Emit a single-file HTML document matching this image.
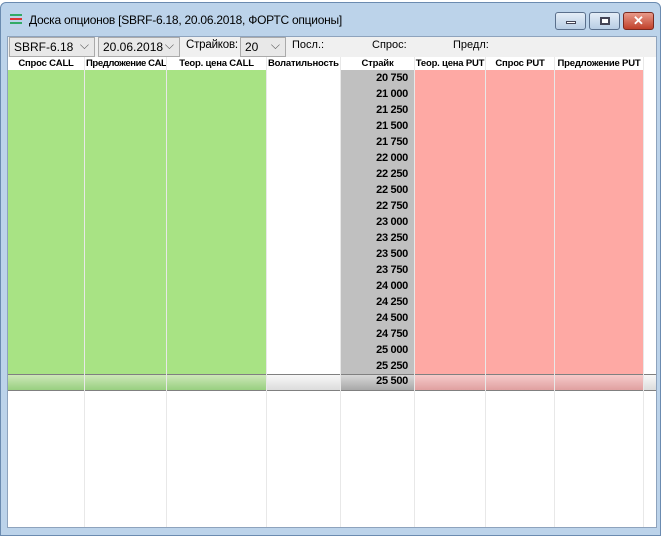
<!DOCTYPE html>
<html><head><meta charset="utf-8"><style>
*{margin:0;padding:0;box-sizing:border-box}
body{width:667px;height:536px;background:#fff;position:relative;overflow:hidden;font-family:"Liberation Sans",sans-serif}
.a{position:absolute}
.frame{left:0;top:2px;width:661px;height:534px;background:#bcd3ea;border:1px solid #6b8bb0;border-radius:6px 6px 0 0}
.tb{font-size:12px;color:#000}
.btn{top:12px;height:18px;border:1px solid #5a6f8c;border-radius:3px;background:linear-gradient(#e4edf7,#b8cde4)}
.content{left:7px;top:36px;width:650px;height:492px;background:#f0f0f0;border:1px solid #8ea3bd}
.sel{top:37px;height:20px;border:1px solid #aaa;background:#e8e8e8;font-size:12px;padding:2px 4px}
.sel:after{content:"⌵";position:absolute;right:5px;top:0px;font-size:12px;color:#555}
.hd{top:57px;height:13px;background:#fff;font-size:9.5px;font-weight:bold;text-align:center;line-height:13px;white-space:nowrap;overflow:hidden;letter-spacing:-0.2px}
.num{right:0;width:100%;font-size:11px;font-weight:bold;text-align:right;padding-right:6px;height:16px;line-height:16px;letter-spacing:-0.3px}
</style></head><body>
<div class="a frame"></div>
<div class="a" style="left:10px;top:13px;width:12px;height:12px">
<div style="height:2px;background:#3a6;margin-top:1px"></div><div style="height:2px;background:#d33;margin-top:2px"></div><div style="height:2px;background:#3a6;margin-top:2px"></div></div>
<div class="a tb" style="left:29px;top:13px;letter-spacing:-0.25px">Доска опционов [SBRF-6.18, 20.06.2018, ФОРТС опционы]</div>
<div class="a btn" style="left:555px;width:31px"><div class="a" style="left:10px;top:8px;width:10px;height:3px;background:#fff;border:1px solid #445"></div></div>
<div class="a btn" style="left:589px;width:31px"><div class="a" style="left:10px;top:4px;width:10px;height:8px;border:2px solid #445;background:#fff"></div></div>
<div class="a btn" style="left:623px;width:31px;background:linear-gradient(#e89a8a,#c0402a);border-color:#7a2a20;color:#fff;font-weight:bold;font-size:13px;text-align:center;line-height:16px">✕</div>
<div class="a content"></div>
<div class="a sel" style="left:9px;width:86px">SBRF-6.18</div>
<div class="a sel" style="left:98px;width:82px">20.06.2018</div>
<div class="a tb" style="left:186px;top:39px;font-size:11.5px;letter-spacing:-0.2px">Страйков:</div>
<div class="a sel" style="left:240px;width:46px">20</div>
<div class="a tb" style="left:292px;top:39px;font-size:11px">Посл.:</div>
<div class="a tb" style="left:372px;top:39px;font-size:11px">Спрос:</div>
<div class="a tb" style="left:453px;top:39px;font-size:11px">Предл:</div>
<div class="a" style="left:8px;top:57px;width:648px;height:470px;background:#fff"></div>
<div class="a hd" style="left:8px;width:76px">Спрос CALL</div>
<div class="a hd" style="left:85px;width:81px;text-align:left;padding-left:1px;letter-spacing:-0.4px">Предложение CALL</div>
<div class="a hd" style="left:167px;width:99px">Теор. цена CALL</div>
<div class="a hd" style="left:267px;width:73px;text-align:left;padding-left:1px">Волатильность</div>
<div class="a hd" style="left:341px;width:73px">Страйк</div>
<div class="a hd" style="left:415px;width:70px">Теор. цена PUT</div>
<div class="a hd" style="left:486px;width:68px">Спрос PUT</div>
<div class="a hd" style="left:555px;width:88px">Предложение PUT</div>
<div class="a" style="left:8px;top:70px;width:258px;height:305px;background:#a8e384"></div>
<div class="a" style="left:340px;top:70px;width:74px;height:305px;background:#c0c0c0"></div>
<div class="a" style="left:414px;top:70px;width:229px;height:305px;background:#fea9a4"></div>
<div class="a" style="left:8px;top:374px;width:648px;height:17px;border-top:1px solid #808080;border-bottom:1px solid #808080;background:linear-gradient(#f8f8f8,#dcdcdc)"></div>
<div class="a" style="left:8px;top:375px;width:258px;height:15px;background:linear-gradient(#cde8b8,#98cf80)"></div>
<div class="a" style="left:340px;top:375px;width:74px;height:15px;background:linear-gradient(#d8d8d8,#a8a8a8)"></div>
<div class="a" style="left:414px;top:375px;width:229px;height:15px;background:linear-gradient(#f6caca,#e0a0a0)"></div>
<div class="a" style="left:84px;top:57px;width:1px;height:470px;background:#e8e8e8"></div>
<div class="a" style="left:166px;top:57px;width:1px;height:470px;background:#e8e8e8"></div>
<div class="a" style="left:266px;top:57px;width:1px;height:470px;background:#e8e8e8"></div>
<div class="a" style="left:340px;top:57px;width:1px;height:470px;background:#e8e8e8"></div>
<div class="a" style="left:414px;top:57px;width:1px;height:470px;background:#e8e8e8"></div>
<div class="a" style="left:485px;top:57px;width:1px;height:470px;background:#e8e8e8"></div>
<div class="a" style="left:554px;top:57px;width:1px;height:470px;background:#e8e8e8"></div>
<div class="a" style="left:643px;top:57px;width:1px;height:470px;background:#e8e8e8"></div>
<div class="a" style="left:340px;top:70px;width:74px">
<div class="num">20 750</div><div class="num">21 000</div><div class="num">21 250</div><div class="num">21 500</div><div class="num">21 750</div><div class="num">22 000</div><div class="num">22 250</div><div class="num">22 500</div><div class="num">22 750</div><div class="num">23 000</div><div class="num">23 250</div><div class="num">23 500</div><div class="num">23 750</div><div class="num">24 000</div><div class="num">24 250</div><div class="num">24 500</div><div class="num">24 750</div><div class="num">25 000</div><div class="num">25 250</div><div class="num" style="margin-top:-1px">25 500</div>
</div>
</body></html>
